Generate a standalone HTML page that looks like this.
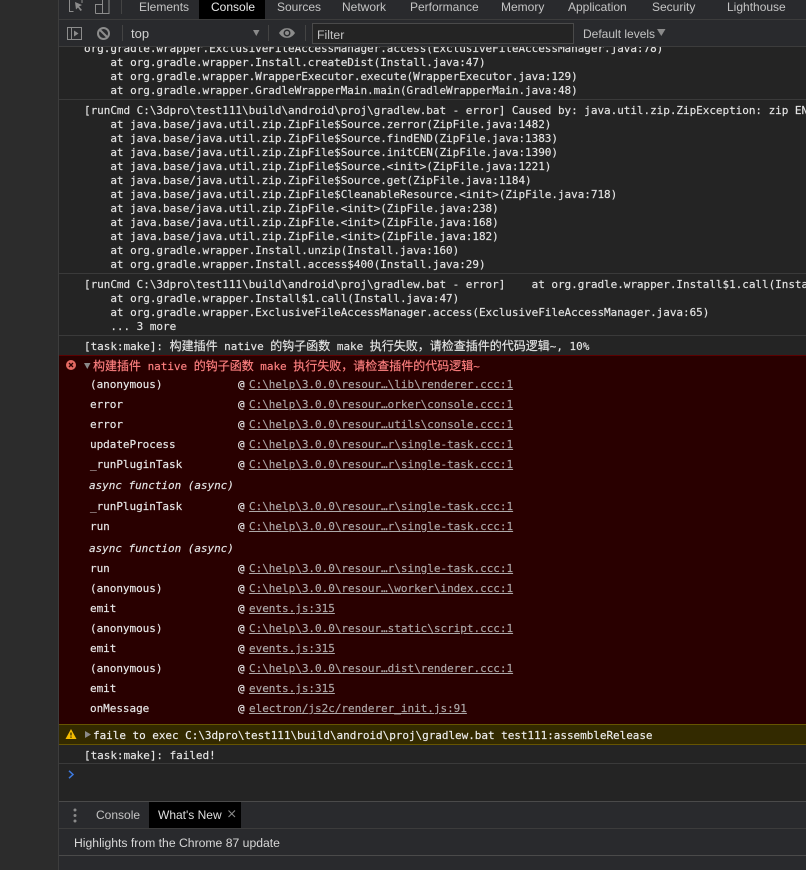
<!DOCTYPE html>
<html><head><meta charset="utf-8">
<style>
html,body{margin:0;padding:0;background:#2b2b2b;}
#p{position:relative;width:806px;height:870px;overflow:hidden;background:#2c2c2c;font-family:"Liberation Sans",sans-serif;}
.a{position:absolute;}
#m{position:absolute;left:59px;top:0;width:747px;height:870px;background:#242424;}
.t{position:absolute;top:0;height:18px;line-height:14px;font-size:12px;color:#c4c4c4;white-space:pre;}
.l{position:absolute;left:84px;margin-top:1px;height:14px;line-height:14px;font-family:"DejaVu Sans Mono","Liberation Mono",monospace;font-size:11px;letter-spacing:-.04px;color:#e4e4e4;white-space:pre;-webkit-text-stroke:.15px currentColor;}
.l i{font-style:normal;font-family:"Noto Sans CJK SC",sans-serif;font-size:12px;letter-spacing:0;}
.s{position:absolute;left:59px;width:747px;height:1px;background:#3a3a3a;}
.f{left:90px;color:#e8e8e8}
.at{left:238px;color:#e8e8e8}
.u{left:249px;color:#ada8a8;text-decoration:underline;letter-spacing:-.02px}
.as{left:89px;font-style:italic;color:#e4e4e4}
</style></head><body><div id="p">
<div id="m"></div>
<div class="a" style="left:58px;top:0;width:1px;height:870px;background:#3d3d3d"></div>

<!-- top tabs -->
<div class="a" style="left:59px;top:0;width:747px;height:46px;background:#292a2d"></div>
<div class="a" style="left:59px;top:19px;width:747px;height:1px;background:#3c3c3c"></div>
<div class="a" style="left:59px;top:46px;width:747px;height:1px;background:#3c3c3c"></div>
<div class="a" style="left:199px;top:0;width:66px;height:19px;background:#000"></div>
<svg class="a" style="left:60px;top:0" width="60" height="46" fill="none">
<path d="M9.5 0v11.5h4M22 0v3" stroke="#8c8c8c"/>
<path d="M15 2l7 3-3 1.500 3 3.500-1.500 1-2.500-3.500-2 2z" fill="#8c8c8c"/>
<path d="M35.500 13.500V4.500h7V0M49 0v13.500H35.500M42.500 4.500v9" stroke="#8c8c8c"/>
<rect x="7.500" y="27.500" width="14" height="12" stroke="#8c8c8c"/>
<path d="M11.500 27.500v12" stroke="#8c8c8c"/>
<path d="M14 30.500l4.500 3-4.500 3z" fill="#8c8c8c"/>
<circle cx="43.500" cy="33.500" r="5.500" stroke="#8c8c8c" stroke-width="2"/>
<path d="M39.500 29.500l8 8" stroke="#8c8c8c" stroke-width="2"/>
</svg>
<div class="a" style="left:121px;top:0;width:1px;height:14px;background:#444"></div>
<div class="t" style="left:139px">Elements</div>
<div class="t" style="left:211px;color:#e8e8e8">Console</div>
<div class="t" style="left:277px">Sources</div>
<div class="t" style="left:342px">Network</div>
<div class="t" style="left:410px">Performance</div>
<div class="t" style="left:501px">Memory</div>
<div class="t" style="left:568px">Application</div>
<div class="t" style="left:652px">Security</div>
<div class="t" style="left:727px">Lighthouse</div>

<!-- toolbar -->
<div class="a" style="left:122px;top:25px;width:1px;height:16px;background:#444"></div>
<div class="a" style="left:268px;top:25px;width:1px;height:16px;background:#444"></div>
<div class="a" style="left:305px;top:25px;width:1px;height:16px;background:#444"></div>
<div class="t" style="left:131px;top:27px;color:#d0d0d0;font-size:13px">top</div>
<svg class="a" style="left:250px;top:28px" width="12" height="10"><path d="M3 2h6.500l-3.200 6z" fill="#8a8a8a"/></svg>
<svg class="a" style="left:278px;top:26px" width="18" height="14"><path d="M1 7c4-6.500 12-6.500 16 0c-4 6.500-12 6.500-16 0z" fill="#8c8c8c"/><circle cx="9" cy="7" r="3.500" fill="#292a2d"/><circle cx="9" cy="7" r="2" fill="#8c8c8c"/></svg>
<div class="a" style="left:312px;top:23px;width:260px;height:19px;background:#242424;border:1px solid #4a4a4a"></div>
<div class="t" style="left:317px;top:28px;color:#c4c4c4;font-size:12.3px">Filter</div>
<div class="t" style="left:583px;top:27px;color:#c4c4c4">Default levels</div>
<svg class="a" style="left:657px;top:28px" width="10" height="9"><path d="M0 1h8.500l-4.200 7z" fill="#8a8a8a"/></svg>

<!-- console log -->
<div class="a" style="left:59px;top:47px;width:747px;height:754px;overflow:hidden;background:#242424">
<div class="l" style="left:25px;top:-6px">org.gradle.wrapper.ExclusiveFileAccessManager.access(ExclusiveFileAccessManager.java:78)</div>
</div>
<div class="l" style="top:55px">    at org.gradle.wrapper.Install.createDist(Install.java:47)</div>
<div class="l" style="top:69px">    at org.gradle.wrapper.WrapperExecutor.execute(WrapperExecutor.java:129)</div>
<div class="l" style="top:83px">    at org.gradle.wrapper.GradleWrapperMain.main(GradleWrapperMain.java:48)</div>
<div class="s" style="top:99px"></div>
<div class="l" style="top:103px">[runCmd C:\3dpro\test111\build\android\proj\gradlew.bat - error] Caused by: java.util.zip.ZipException: zip END header not found</div>
<div class="l" style="top:117px">    at java.base/java.util.zip.ZipFile$Source.zerror(ZipFile.java:1482)</div>
<div class="l" style="top:131px">    at java.base/java.util.zip.ZipFile$Source.findEND(ZipFile.java:1383)</div>
<div class="l" style="top:145px">    at java.base/java.util.zip.ZipFile$Source.initCEN(ZipFile.java:1390)</div>
<div class="l" style="top:159px">    at java.base/java.util.zip.ZipFile$Source.&lt;init&gt;(ZipFile.java:1221)</div>
<div class="l" style="top:173px">    at java.base/java.util.zip.ZipFile$Source.get(ZipFile.java:1184)</div>
<div class="l" style="top:187px">    at java.base/java.util.zip.ZipFile$CleanableResource.&lt;init&gt;(ZipFile.java:718)</div>
<div class="l" style="top:201px">    at java.base/java.util.zip.ZipFile.&lt;init&gt;(ZipFile.java:238)</div>
<div class="l" style="top:215px">    at java.base/java.util.zip.ZipFile.&lt;init&gt;(ZipFile.java:168)</div>
<div class="l" style="top:229px">    at java.base/java.util.zip.ZipFile.&lt;init&gt;(ZipFile.java:182)</div>
<div class="l" style="top:243px">    at org.gradle.wrapper.Install.unzip(Install.java:160)</div>
<div class="l" style="top:257px">    at org.gradle.wrapper.Install.access$400(Install.java:29)</div>
<div class="s" style="top:273px"></div>
<div class="l" style="top:277px">[runCmd C:\3dpro\test111\build\android\proj\gradlew.bat - error]    at org.gradle.wrapper.Install$1.call(Install.java:81)</div>
<div class="l" style="top:291px">    at org.gradle.wrapper.Install$1.call(Install.java:47)</div>
<div class="l" style="top:305px">    at org.gradle.wrapper.ExclusiveFileAccessManager.access(ExclusiveFileAccessManager.java:65)</div>
<div class="l" style="top:319px">    ... 3 more</div>
<div class="s" style="top:335px"></div>
<div class="l" style="top:338px">[task:make]: <i>构建插件</i> native <i>的钩子函数</i> make <i>执行失败，请检查插件的代码逻辑</i>~, 10%</div>

<!-- error block -->
<div class="a" style="left:59px;top:355px;width:747px;height:369px;background:#290000;border-top:1px solid #5c0000;box-sizing:border-box"></div>
<svg class="a" style="left:66px;top:360px" width="10" height="10"><circle cx="5" cy="5" r="5" fill="#e46962"/><path d="M3 3l4 4M7 3l-4 4" stroke="#290000" stroke-width="1.300"/></svg>
<svg class="a" style="left:84px;top:363px" width="8" height="7"><path d="M0 0h6.500l-3.200 6z" fill="#8a8a8a"/></svg>
<div class="l" style="left:93px;top:358px;color:#ff8080"><i>构建插件</i> native <i>的钩子函数</i> make <i>执行失败，请检查插件的代码逻辑</i>~</div>

<div class="l f" style="top:377px">(anonymous)</div><div class="l at" style="top:377px">@</div><div class="l u" style="top:377px">C:\help\3.0.0\resour…\lib\renderer.ccc:1</div>
<div class="l f" style="top:397px">error</div><div class="l at" style="top:397px">@</div><div class="l u" style="top:397px">C:\help\3.0.0\resour…orker\console.ccc:1</div>
<div class="l f" style="top:417px">error</div><div class="l at" style="top:417px">@</div><div class="l u" style="top:417px">C:\help\3.0.0\resour…utils\console.ccc:1</div>
<div class="l f" style="top:437px">updateProcess</div><div class="l at" style="top:437px">@</div><div class="l u" style="top:437px">C:\help\3.0.0\resour…r\single-task.ccc:1</div>
<div class="l f" style="top:457px">_runPluginTask</div><div class="l at" style="top:457px">@</div><div class="l u" style="top:457px">C:\help\3.0.0\resour…r\single-task.ccc:1</div>
<div class="l as" style="top:478px">async function (async)</div>
<div class="l f" style="top:499px">_runPluginTask</div><div class="l at" style="top:499px">@</div><div class="l u" style="top:499px">C:\help\3.0.0\resour…r\single-task.ccc:1</div>
<div class="l f" style="top:519px">run</div><div class="l at" style="top:519px">@</div><div class="l u" style="top:519px">C:\help\3.0.0\resour…r\single-task.ccc:1</div>
<div class="l as" style="top:541px">async function (async)</div>
<div class="l f" style="top:561px">run</div><div class="l at" style="top:561px">@</div><div class="l u" style="top:561px">C:\help\3.0.0\resour…r\single-task.ccc:1</div>
<div class="l f" style="top:581px">(anonymous)</div><div class="l at" style="top:581px">@</div><div class="l u" style="top:581px">C:\help\3.0.0\resour…\worker\index.ccc:1</div>
<div class="l f" style="top:601px">emit</div><div class="l at" style="top:601px">@</div><div class="l u" style="top:601px">events.js:315</div>
<div class="l f" style="top:621px">(anonymous)</div><div class="l at" style="top:621px">@</div><div class="l u" style="top:621px">C:\help\3.0.0\resour…static\script.ccc:1</div>
<div class="l f" style="top:641px">emit</div><div class="l at" style="top:641px">@</div><div class="l u" style="top:641px">events.js:315</div>
<div class="l f" style="top:661px">(anonymous)</div><div class="l at" style="top:661px">@</div><div class="l u" style="top:661px">C:\help\3.0.0\resour…dist\renderer.ccc:1</div>
<div class="l f" style="top:681px">emit</div><div class="l at" style="top:681px">@</div><div class="l u" style="top:681px">events.js:315</div>
<div class="l f" style="top:701px">onMessage</div><div class="l at" style="top:701px">@</div><div class="l u" style="top:701px">electron/js2c/renderer_init.js:91</div>

<!-- warning -->
<div class="a" style="left:59px;top:724px;width:747px;height:21px;background:#332a00;border-top:1px solid #665500;border-bottom:1px solid #665500;box-sizing:border-box"></div>
<svg class="a" style="left:65px;top:729px" width="12" height="10"><path d="M6 0l5.500 10H.5z" fill="#f5bd00"/><path d="M6 3.500v3M6 7.500v1.200" stroke="#332a00" stroke-width="1.300"/></svg>
<svg class="a" style="left:85px;top:731px" width="7" height="8"><path d="M0 0l6 3.500-6 3.500z" fill="#8a8a8a"/></svg>
<div class="l" style="left:93px;top:728px;color:#eeeeee">faile to exec C:\3dpro\test111\build\android\proj\gradlew.bat test111:assembleRelease</div>
<div class="l" style="top:748px">[task:make]: failed!</div>
<div class="s" style="top:763px"></div>
<svg class="a" style="left:68px;top:770px" width="7" height="9" fill="none"><path d="M1 .8l4 3.700-4 3.700" stroke="#3d7ae0" stroke-width="1.500"/></svg>

<!-- drawer -->
<div class="a" style="left:59px;top:801px;width:747px;height:27px;background:#292a2d;border-top:1px solid #4a4a4a;box-sizing:border-box"></div>
<div class="a" style="left:59px;top:828px;width:747px;height:1px;background:#3c3c3c"></div>
<div class="a" style="left:59px;top:855px;width:747px;height:1px;background:#4a4a4a"></div>
<div class="a" style="left:59px;top:829px;width:747px;height:26px;background:#292a2d"></div>
<div class="a" style="left:59px;top:856px;width:747px;height:14px;background:#292a2d"></div>
<div class="a" style="left:149px;top:802px;width:92px;height:26px;background:#000"></div>
<svg class="a" style="left:72px;top:808px" width="6" height="15"><circle cx="3" cy="2" r="1.500" fill="#8a8a8a"/><circle cx="3" cy="7.500" r="1.500" fill="#8a8a8a"/><circle cx="3" cy="13" r="1.500" fill="#8a8a8a"/></svg>
<div class="t" style="left:96px;top:808px">Console</div>
<div class="t" style="left:158px;top:808px;color:#dedede">What's New</div>
<svg class="a" style="left:228px;top:810px" width="8" height="8"><path d="M.5.5l6.500 6.500M7 .5L.5 7" stroke="#8a8a8a" stroke-width="1.100"/></svg>
<div class="t" style="left:74px;top:836px;color:#d8d8d8;font-size:12.2px">Highlights from the Chrome 87 update</div>
</div></body></html>
